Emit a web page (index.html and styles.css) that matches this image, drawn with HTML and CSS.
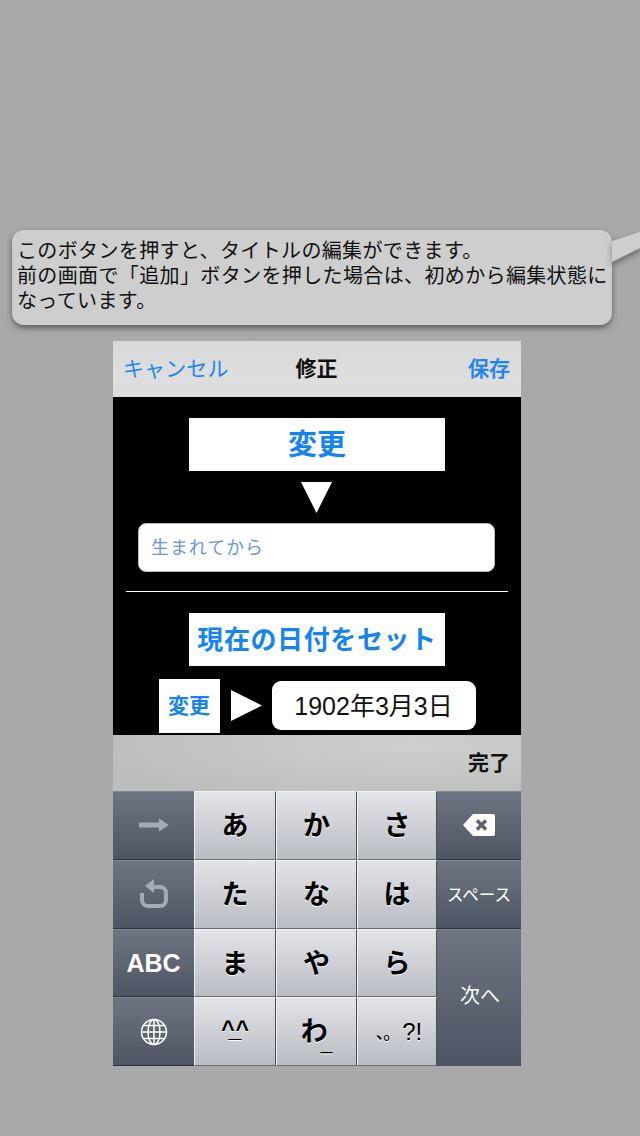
FILE: index.html
```html
<!DOCTYPE html>
<html lang="ja">
<head>
<meta charset="utf-8">
<title>修正</title>
<link rel="stylesheet" href="styles.css">
</head>
<body>
<div class="bubble">
  <svg class="tail" width="40" height="40" viewBox="0 0 40 40"><polygon class="tail-shape" points="0,11 28,2 28,18 0,32"/></svg>
  <p class="bubble-text">このボタンを押すと、タイトルの編集ができます。<br>前の画面で「追加」ボタンを押した場合は、初めから編集状態になっています。</p>
</div>
<main class="phone">
  <header class="navbar">
    <span class="nav-link">キャンセル</span>
    <span class="nav-title">修正</span>
    <span class="nav-save">保存</span>
  </header>
  <section class="content">
    <div class="wide-btn big">変更</div>
    <svg class="arrow-down" width="31" height="31" viewBox="0 0 31 31"><polygon points="0,0 31,0 15.5,31" fill="#fff"/></svg>
    <div class="input placeholder">生まれてから</div>
    <div class="rule"></div>
    <div class="wide-btn mid">現在の日付をセット</div>
    <div class="date-row">
      <div class="small-btn">変更</div>
      <svg class="arrow-right" width="31" height="31" viewBox="0 0 31 31"><polygon points="0,0 31,15.5 0,31" fill="#fff"/></svg>
      <div class="date-field">1902年3月3日</div>
    </div>
  </section>
  <div class="toolbar"><span class="done">完了</span></div>
  <div class="keyboard">
    <div class="key dark">
      <svg class="icon-up" width="32" height="16" viewBox="0 0 32 16"><path d="M1 5.500H21V1.500L31 8 21 14.500V10.500H1Z" fill="#a5abb4"/></svg>
    </div>
    <div class="key light">あ</div>
    <div class="key light">か</div>
    <div class="key light">さ</div>
    <div class="key dark">
      <svg class="icon-up" width="34" height="22" viewBox="0 0 34 22"><path d="M11 0H31a2 2 0 0 1 2 2V20a2 2 0 0 1-2 2H11L1 11Z" fill="#fff"/><path d="M15 6.500 24 15.500M24 6.500 15 15.500" stroke="#5a6270" stroke-width="3.500" fill="none"/></svg>
    </div>
    <div class="key dark">
      <svg class="icon-up" width="30" height="32" viewBox="0 0 30 32"><path d="M12 9H21a6 6 0 0 1 6 6V22a6 6 0 0 1-6 6H9a6 6 0 0 1-6-6V15" fill="none" stroke="#a5abb4" stroke-width="4"/><path d="M15 1V15L6 8Z" fill="#a5abb4"/></svg>
    </div>
    <div class="key light">た</div>
    <div class="key light">な</div>
    <div class="key light">は</div>
    <div class="key dark small-label">スペース</div>
    <div class="key dark abc">ABC</div>
    <div class="key light">ま</div>
    <div class="key light">や</div>
    <div class="key light">ら</div>
    <div class="key dark next">次へ</div>
    <div class="key dark">
      <svg width="28" height="28" viewBox="0 0 28 28" fill="none" stroke="#fff" stroke-width="1.500"><circle cx="14" cy="14" r="12.500"/><ellipse cx="14" cy="14" rx="6" ry="12.500"/><path d="M14 1.500V26.500M1.500 14H26.500M3.500 7.500H24.500M3.500 20.500H24.500"/></svg>
    </div>
    <div class="key light face">^_^</div>
    <div class="key light">わ<span class="mini">_</span></div>
    <div class="key light punct"><span class="punct-kana">、。</span>?!</div>
  </div>
</main>
</body>
</html>
```
FILE: styles.css
```css
* { box-sizing: border-box; }
html, body { margin: 0; height: 1136px; overflow: hidden; }
body {
  background: #a9a9a9;
  padding-top: 230px;
  font-family: "Liberation Sans", "Noto Sans CJK JP", sans-serif;
}
.bubble {
  position: relative;
  margin-left: 12px;
  width: 600px;
  height: 95px;
  padding: 9px 0 0 5px;
  background: #cecece;
  border-radius: 12px;
  box-shadow: 0 3px 6px rgba(0, 0, 0, .45);
}
.tail { position: absolute; left: 600px; top: 0; filter: drop-shadow(0 3px 3px rgba(0,0,0,.4)); }
.tail-shape { fill: #cecece; }
.bubble-text {
  margin: 0;
  width: 595px;
  font-size: 20px;
  line-height: 25px;
  letter-spacing: .37px;
  color: #111;
}
.phone { margin: 16px 0 0 113px; width: 408px; }
.navbar {
  height: 56px;
  padding: 0 11px 4px 10px;
  display: grid;
  grid-template-columns: 1fr auto 1fr;
  align-items: center;
  background: linear-gradient(#d9d9d9, #dedede 70%, #dbdbdb);
  font-size: 21px;
}
.nav-link { color: #1b84f2; letter-spacing: .1px; }
.nav-title { font-weight: 700; color: #111; }
.nav-save { color: #1b84f2; font-weight: 500; justify-self: end; -webkit-text-stroke: .3px #1b84f2; }
.content {
  height: 338px;
  background: #000;
  display: flex;
  flex-direction: column;
  align-items: center;
  padding-top: 21px;
}
.wide-btn {
  width: 256px;
  height: 53px;
  flex: none;
  display: flex;
  align-items: center;
  justify-content: center;
  padding-bottom: 5px;
  background: #fff;
  color: #1484f5;
  font-weight: 700;
}
.big { font-size: 29px; }
.mid { font-size: 26px; letter-spacing: .6px; white-space: nowrap; }
.arrow-down { margin: 11px 1px 0 0; display: block; flex: none; }
.input {
  margin: 10px 1px 0 0;
  width: 357px;
  height: 49px;
  flex: none;
  padding: 0 0 3px 12px;
  display: flex;
  align-items: center;
  background: #fff;
  border: 1px solid #bbb;
  border-radius: 8px;
  font-size: 18px;
  letter-spacing: .9px;
}
.placeholder { color: #6b93ea; }
.rule { margin-top: 19px; width: 382px; height: 1px; flex: none; background: #fff; margin-bottom: 21px; }
.date-row {
  margin-top: 13px;
  width: 317px;
  height: 54px;
  flex: none;
  display: flex;
  align-items: center;
}
.small-btn {
  width: 61px;
  height: 54px;
  flex: none;
  display: flex;
  align-items: center;
  justify-content: center;
  padding-bottom: 4px;
  background: #fff;
  color: #1484f5;
  font-weight: 700;
  font-size: 21px;
}
.arrow-right { margin: 0 0 2px 11px; flex: none; }
.date-field {
  margin: 0 0 1px 10px;
  width: 204px;
  height: 49px;
  flex: none;
  display: flex;
  align-items: center;
  justify-content: center;
  padding-bottom: 3px;
  background: #fff;
  border-radius: 9px;
  font-size: 25px;
  color: #111;
}
.toolbar {
  height: 56px;
  padding: 0 11px 4px;
  display: flex;
  align-items: center;
  justify-content: flex-end;
  background: radial-gradient(ellipse 320px 60px at 300px 10px, #cfcfcf, #bdbdbd);
}
.done { font-size: 21px; font-weight: 700; color: #111; }
.keyboard {
  height: 275px;
  display: grid;
  grid-template-columns: 81px 82px 81px 80px 84px;
  grid-template-rows: 69px 69px 68px 69px;
  background: #5a6170;
}
.key {
  display: flex;
  align-items: center;
  justify-content: center;
  white-space: nowrap;
}
.light {
  padding-bottom: 4px;
  background: linear-gradient(#e3e4e8, #b9bcc3);
  border-top: 1px solid #f4f4f6;
  border-left: 1px solid #f0f0f2;
  border-right: 1px solid #4a4e55;
  border-bottom: 1px solid #6a6d72;
  font-size: 27px;
  font-weight: 700;
  color: #000;
  text-shadow: 0 1px 0 #fff;
}
.dark {
  background: linear-gradient(#6e7582, #4d5463);
  border-bottom: 1px solid #2e333c;
  border-top: 1px solid #7d838f;
  color: #fff;
}
.icon-up { margin-bottom: 2px; }
.small-label { font-size: 16.500px; padding-bottom: 2px; }
.abc { font-size: 25px; font-weight: 700; }
.next { grid-column: 5; grid-row: 3 / span 2; border-bottom: 0; font-size: 20px; padding: 0 0 8px 2px; }
.face { font-size: 23px; letter-spacing: -6px; padding-right: 6px; }
.mini { font-size: 21px; font-weight: 400; align-self: flex-end; margin-left: -7px; padding-bottom: 7px; }
.punct { font-size: 24px; font-weight: 500; padding: 0 0 0 4px; }
.punct-kana { font-size: 17px; letter-spacing: -1px; margin-right: 3px; }
```
